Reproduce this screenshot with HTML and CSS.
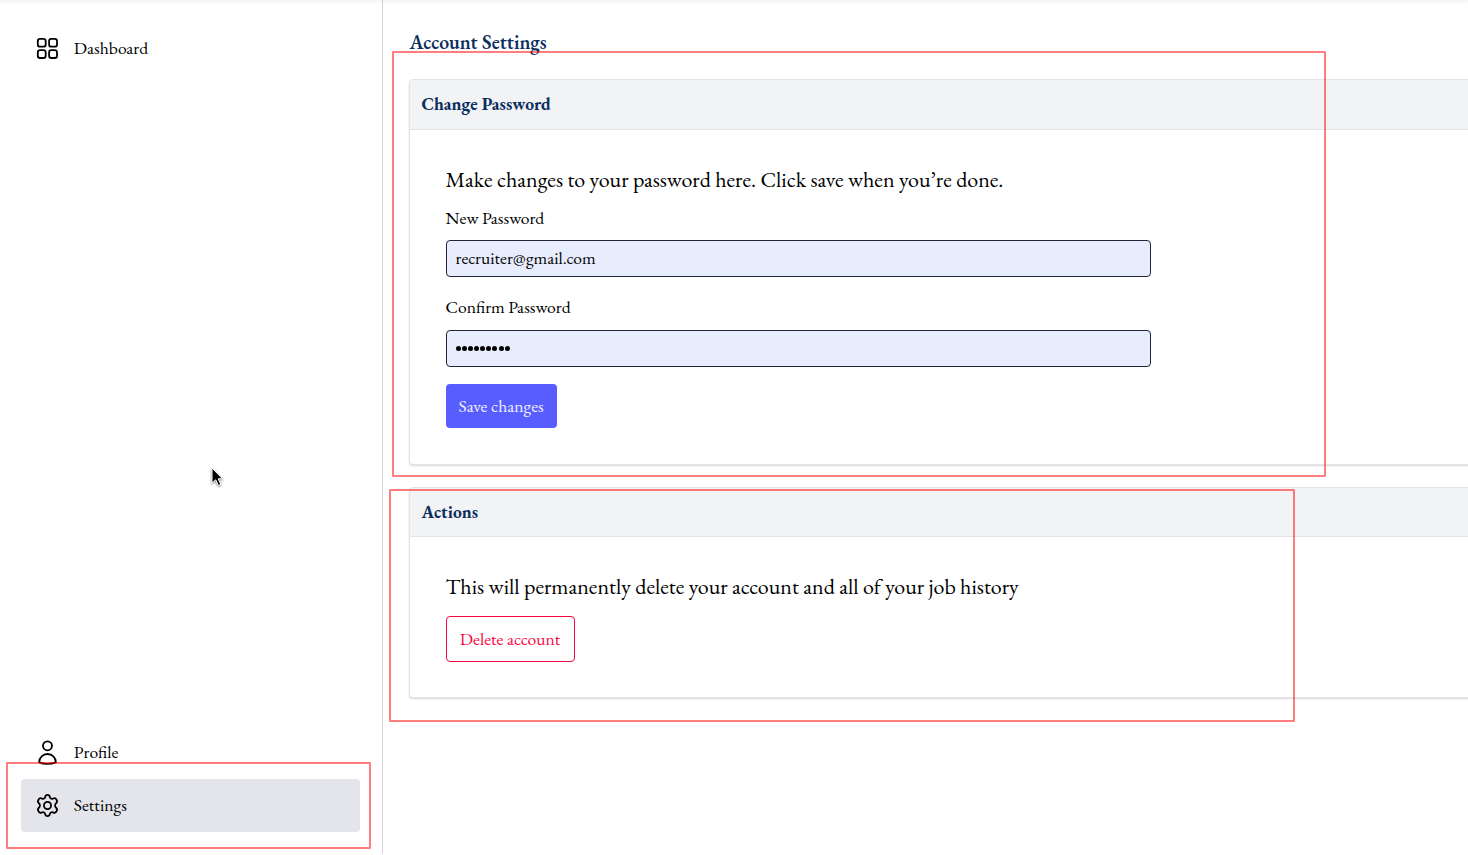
FILE: index.html
```html
<!DOCTYPE html>
<html lang="en">
<head>
<meta charset="utf-8">
<title>Account Settings</title>
<link rel="stylesheet" href="styles.css">
</head>
<body>
<div class="layout">
  <aside class="sidebar">
    <nav class="nav">
      <a class="nav-item">
        <svg class="icon" viewBox="0 0 25 25"><rect x="2.8" y="2.8" width="7.9" height="7.9" rx="2.3"/><rect x="14.1" y="2.8" width="7.9" height="7.9" rx="2.3"/><rect x="2.8" y="14.1" width="7.9" height="7.9" rx="2.3"/><rect x="14.1" y="14.1" width="7.9" height="7.9" rx="2.3"/></svg>
        <span>Dashboard</span>
      </a>
    </nav>
    <nav class="nav">
      <a class="nav-item">
        <svg class="icon" viewBox="0 0 25 25"><circle cx="12.5" cy="5.8" r="4.5"/><path d="M4.1 22.3C4.3 17.3 7.9 14 12.5 14S20.7 17.3 20.9 22.3C18.6 23.3 15.7 23.8 12.5 23.8S6.4 23.3 4.1 22.3Z"/></svg>
        <span>Profile</span>
      </a>
      <a class="nav-item active">
        <svg class="icon" viewBox="0 0 24 24"><g transform="translate(.6 .6) scale(.95)"><circle cx="12" cy="12" r="3.6"/><path d="M9.7 3.2C9.9 1.9 10.6 1.2 12 1.2S14.1 1.9 14.3 3.2C14.6 4.9 16.1 5.7 17.6 5C19 4.3 20.3 4.7 21 5.9C22 7.5 22 8.5 20.9 9.5C19.2 10.9 19.2 13.1 20.9 14.5C22 15.5 22 16.5 21 18.1C20.3 19.3 19 19.7 17.6 19C16.1 18.3 14.6 19.1 14.3 20.8C14.1 22.1 13.4 22.8 12 22.8S9.9 22.1 9.7 20.8C9.4 19.1 7.9 18.3 6.4 19C5 19.7 3.7 19.3 3 18.1C2 16.5 2 15.5 3.1 14.5C4.8 13.1 4.8 10.9 3.1 9.5C2 8.5 2 7.5 3 5.9C3.7 4.7 5 4.3 6.4 5C7.9 5.7 9.4 4.9 9.7 3.2Z"/></g></svg>
        <span>Settings</span>
      </a>
    </nav>
  </aside>
  <main class="content">
    <h1 class="title">Account Settings</h1>
    <section class="card card-password">
      <h2 class="card-head">Change Password</h2>
      <form class="card-body">
        <p class="lead">Make changes to your password here. Click save when you’re done.</p>
        <label class="label label-new">New Password</label>
        <div class="input">recruiter@gmail.com</div>
        <label class="label label-confirm">Confirm Password</label>
        <div class="input dots"><i></i><i></i><i></i><i></i><i></i><i></i><i></i><i></i><i></i></div>
        <button type="button" class="btn btn-save">Save changes</button>
      </form>
    </section>
    <section class="card card-actions">
      <h2 class="card-head head-actions">Actions</h2>
      <div class="card-body">
        <p class="lead">This will permanently delete your account and all of your job history</p>
        <button type="button" class="btn btn-delete">Delete account</button>
      </div>
    </section>
  </main>
</div>
<div class="mark mark-password"></div>
<div class="mark mark-actions"></div>
<div class="mark mark-settings"></div>
<svg class="cursor" viewBox="0 0 14 20"><path d="M1 1V16L4.7 12.8L7.4 18.5L9.8 17.4L7.2 11.8H11.5Z"/></svg>
</body>
</html>
```
FILE: styles.css
```css
* { box-sizing: border-box; }
body {
  margin: 0;
  height: 855px;
  overflow: hidden;
  position: relative;
  background: linear-gradient(#f4f4f5, #fff 4px);
  color: #000;
  font-family: "EB Garamond", "Liberation Serif", serif;
  font-size: 17.6px;
}
h1, h2, p { margin: 0; }
.layout { display: flex; height: 854px; }
.sidebar {
  flex: 0 0 383px;
  border-right: 1px solid #d1d0db;
  padding: 22px 22px 22px 21px;
  display: flex;
  flex-direction: column;
  justify-content: space-between;
}
.nav-item {
  display: flex;
  align-items: center;
  gap: 13.8px;
  height: 53px;
  padding-left: 14px;
  border-radius: 4px;
  line-height: 26px;
}
.nav-item span { padding-bottom: 1px; }
.active { background: #e4e5ea; }
.icon {
  width: 25px;
  height: 25px;
  fill: none;
  stroke: #000;
  stroke-width: 1.8;
  stroke-linejoin: round;
}
.content { flex: 1; padding: 30px 0 0 26px; min-width: 0; }
.title {
  font-size: 19.8px;
  font-weight: 600;
  line-height: 24px;
  color: #0b2e5f;
  padding-left: .5px;
}
.card {
  width: 1120px;
  background: #fff;
  border: 1px solid #e4e5e9;
  border-radius: 4px;
  box-shadow: 0 1px 2px rgba(0, 0, 0, .16);
}
.card-password { margin-top: 25px; height: 386px; }
.card-actions { margin-top: 22px; height: 211px; }
.card-head {
  height: 50px;
  padding-left: 11.5px;
  background: #f2f3f5;
  border-bottom: 1px solid #e2e3e9;
  border-radius: 3px 3px 0 0;
  color: #0b2e5f;
  font-size: 17.6px;
  line-height: 48px;
}
.head-actions { height: 49px; }
.card-body { display: flex; flex-direction: column; align-items: flex-start; padding: 35px 35.6px; }
.lead { font-size: 22px; line-height: 30px; }
.label { line-height: 24px; }
.label-new { margin-top: 11px; }
.label-confirm { margin-top: 18px; }
.input {
  width: 705px;
  height: 37px;
  margin-top: 10px;
  padding-left: 9px;
  border: 1px solid #1f2638;
  border-radius: 4px;
  background: #e8edfe;
  line-height: 34px;
}
.label-confirm + .input { margin-top: 11px; }
.dots { display: flex; align-items: center; gap: 1.15px; padding-bottom: 1px; }
.dots i { width: 5px; height: 5px; border-radius: 50%; background: #000; }
.btn { font-family: inherit; font-size: 17.6px; border-radius: 4px; padding: 0 0 2px; }
.btn-save {
  width: 111px;
  height: 44px;
  margin-top: 17px;
  border: 0;
  background: #585dff;
  color: #f2f2ff;
}
.btn-delete {
  width: 129px;
  height: 46px;
  margin-top: 14px;
  border: 1px solid #f8053f;
  background: #fff;
  color: #f8053f;
}
.mark { position: absolute; border: 2px solid #ff0000; opacity: .5; border-radius: 1px; pointer-events: none; }
.mark-password { left: 392px; top: 51px; width: 934px; height: 426px; }
.mark-actions { left: 389px; top: 489px; width: 906px; height: 233px; }
.mark-settings { left: 6px; top: 762px; width: 365px; height: 87px; }
.cursor {
  position: absolute;
  left: 211px;
  top: 467px;
  width: 14px;
  height: 20px;
  fill: #000;
  stroke: #fff;
  stroke-width: 1;
  filter: drop-shadow(0 1px 1px rgba(0, 0, 0, .5));
}
```
